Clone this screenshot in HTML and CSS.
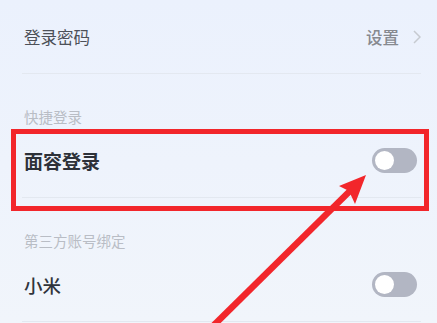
FILE: index.html
```html
<!DOCTYPE html>
<html lang="zh-CN">
<head>
  <meta charset="UTF-8">
  <meta name="viewport" content="width=device-width, initial-scale=1.0">
  <title>账号与安全</title>
  <link rel="stylesheet" href="styles.css">
</head>
<body>
  <div class="page">
    <div class="row">
      <span class="label">登录密码</span>
      <span class="value">设置
        <svg class="chevron" width="8" height="14" viewBox="0 0 8 14">
          <polyline points="1,1 7,7 1,13" fill="none" stroke="#c6cad0" stroke-width="1.5" />
        </svg>
      </span>
    </div>

    <div class="section-title">快捷登录</div>
    <div class="row">
      <span class="label label-strong">面容登录</span>
      <span class="switch"><span class="knob"></span></span>
    </div>

    <div class="section-title">第三方账号绑定</div>
    <div class="row">
      <span class="label label-medium">小米</span>
      <span class="switch"><span class="knob"></span></span>
    </div>

    <!-- annotation: highlight box + arrow -->
    <div class="highlight"></div>
    <svg class="arrow" width="437" height="323" viewBox="0 0 437 323">
      <line x1="211" y1="328" x2="356" y2="185" stroke="#f2262b" stroke-width="6.5" />
      <polygon points="366,175 339,186 349,191 355,204" fill="#f2262b" />
    </svg>
  </div>
</body>
</html>
```

FILE: styles.css
```css
body {
  margin: 0;
  padding: 0;
  background: #eef3fc;
  font-family: "Noto Sans CJK SC", "Noto Sans", sans-serif;
  overflow: hidden;
}

.page {
  position: relative;
  width: 437px;
  height: 323px;
  background: linear-gradient(#ebf1fd, #f1f5fb);
}

.row {
  display: flex;
  align-items: center;
  justify-content: space-between;
  height: 73px;
  margin: 0 16px 0 22px;
  padding: 0 4px 0 2px;
  border-bottom: 1px solid #e3e8f0;
}

.label {
  font-size: 16.5px;
  color: #4c5058;
}

.label-strong {
  font-size: 19px;
  font-weight: 700;
  color: #2d3139;
}

.label-medium {
  font-size: 18.5px;
  font-weight: 500;
  color: #30343b;
}

.value {
  display: flex;
  align-items: center;
  gap: 14px;
  font-size: 16.5px;
  font-weight: 500;
  color: #86898f;
  margin-right: -4px;
}

.chevron {
  display: block;
  margin-top: 1px;
}

.section-title {
  height: 50px;
  box-sizing: border-box;
  padding: 35px 0 0 24px;
  font-size: 14.5px;
  line-height: 16px;
  color: #b9bdc5;
}

.switch {
  position: relative;
  width: 45px;
  height: 25px;
  border-radius: 13px;
  background: #b2b6c3;
}

.knob {
  position: absolute;
  left: 3px;
  top: 3px;
  width: 19px;
  height: 19px;
  border-radius: 50%;
  background: #fff;
}

.highlight {
  position: absolute;
  left: 11px;
  top: 129px;
  width: 408px;
  height: 72px;
  border: 5px solid #f2262b;
}

.arrow {
  position: absolute;
  left: 0;
  top: 0;
}
```
